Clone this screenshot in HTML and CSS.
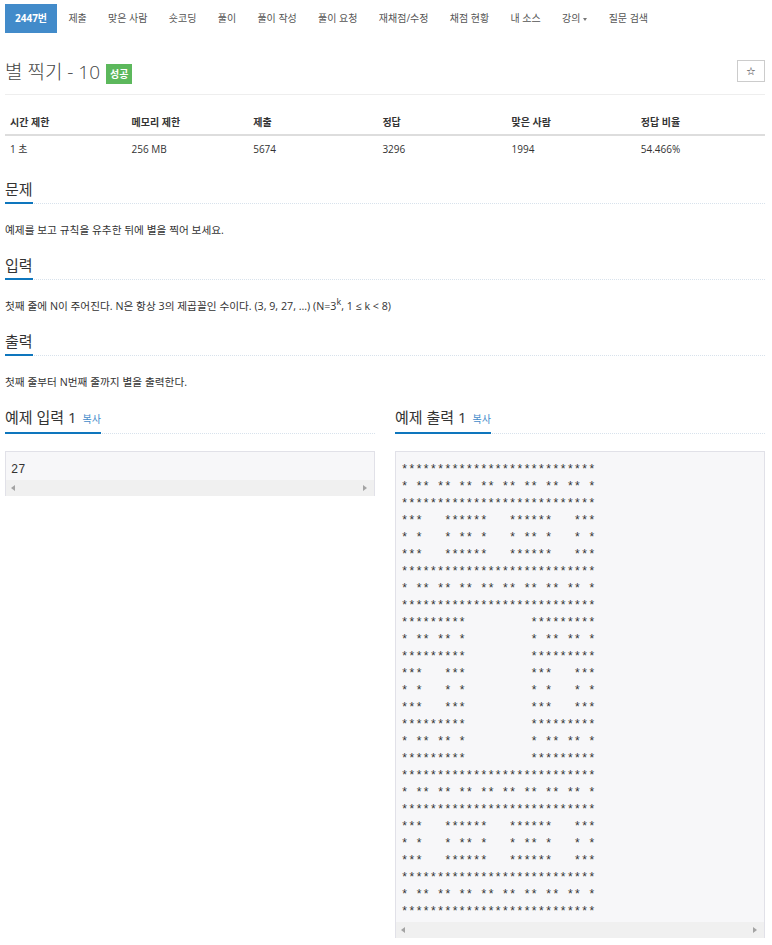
FILE: index.html
```html
<!DOCTYPE html>
<html lang="ko">

<head>
  <meta charset="UTF-8">
  <meta name="viewport" content="width=device-width, initial-scale=1.0">
  <title>2447번: 별 찍기 - 10</title>
  <link rel="stylesheet" href="styles.css">
</head>

<body>
  <div class="page">
    <ul class="problem-menu">
      <li class="active"><a href="#">2447번</a></li>
      <li><a href="#">제출</a></li>
      <li><a href="#">맞은 사람</a></li>
      <li><a href="#">숏코딩</a></li>
      <li><a href="#">풀이</a></li>
      <li><a href="#">풀이 작성</a></li>
      <li><a href="#">풀이 요청</a></li>
      <li><a href="#">재채점/수정</a></li>
      <li><a href="#">채점 현황</a></li>
      <li><a href="#">내 소스</a></li>
      <li><a href="#">강의<span class="caret"></span></a></li>
      <li><a href="#">질문 검색</a></li>
    </ul>

    <div class="page-header">
      <h1 class="problem-title">별 찍기 - 10 <span class="label-success">성공</span></h1>
      <button class="btn-star" type="button">☆</button>
    </div>

    <table class="problem-info">
      <thead>
        <tr>
          <th>시간 제한</th>
          <th>메모리 제한</th>
          <th>제출</th>
          <th>정답</th>
          <th>맞은 사람</th>
          <th>정답 비율</th>
        </tr>
      </thead>
      <tbody>
        <tr>
          <td>1 초</td>
          <td>256 MB</td>
          <td>5674</td>
          <td>3296</td>
          <td>1994</td>
          <td>54.466%</td>
        </tr>
      </tbody>
    </table>

    <section class="problem-section">
      <h2 class="headline"><span>문제</span></h2>
      <p>예제를 보고 규칙을 유추한 뒤에 별을 찍어 보세요.</p>
    </section>

    <section class="problem-section">
      <h2 class="headline"><span>입력</span></h2>
      <p>첫째 줄에 N이 주어진다. N은 항상 3의 제곱꼴인 수이다. (3, 9, 27, ...) (N=3<sup>k</sup>, 1 ≤ k &lt; 8)</p>
    </section>

    <section class="problem-section">
      <h2 class="headline"><span>출력</span></h2>
      <p>첫째 줄부터 N번째 줄까지 별을 출력한다.</p>
    </section>

    <div class="samples">
      <div class="sample">
        <h2 class="headline"><span>예제 입력 1 <a class="copy" href="#">복사</a></span></h2>
        <div class="sample-box">
          <pre class="sampledata">27</pre>
          <div class="scrollbar"><span class="arrow-left"></span><span class="arrow-right"></span></div>
        </div>
      </div>
      <div class="sample">
        <h2 class="headline"><span>예제 출력 1 <a class="copy" href="#">복사</a></span></h2>
        <div class="sample-box">
          <pre class="sampledata">***************************
* ** ** ** ** ** ** ** ** *
***************************
***   ******   ******   ***
* *   * ** *   * ** *   * *
***   ******   ******   ***
***************************
* ** ** ** ** ** ** ** ** *
***************************
*********         *********
* ** ** *         * ** ** *
*********         *********
***   ***         ***   ***
* *   * *         * *   * *
***   ***         ***   ***
*********         *********
* ** ** *         * ** ** *
*********         *********
***************************
* ** ** ** ** ** ** ** ** *
***************************
***   ******   ******   ***
* *   * ** *   * ** *   * *
***   ******   ******   ***
***************************
* ** ** ** ** ** ** ** ** *
***************************</pre>
          <div class="scrollbar"><span class="arrow-left"></span><span class="arrow-right"></span></div>
        </div>
      </div>
    </div>
  </div>
</body>

</html>
```

FILE: styles.css
```css
* {
  box-sizing: border-box;
}

body {
  margin: 0;
  font-family: 'Open Sans', 'Noto Sans CJK KR', sans-serif;
  font-size: 10px;
  color: #333;
  background: white;
}

a {
  text-decoration: none;
}

.page {
  padding: 0 7px 0 5px;
}

/* top menu */
.problem-menu {
  list-style: none;
  margin: 4px 0 0;
  padding: 0;
  display: flex;
  gap: 1.3px;
}

.problem-menu a {
  display: block;
  padding: 0 10px;
  line-height: 29px;
  color: #555;
}

.problem-menu .active a {
  background: #428bca;
  color: white;
  font-weight: bold;
}

.caret {
  display: inline-block;
  width: 0;
  height: 0;
  margin-left: 3px;
  vertical-align: middle;
  border-top: 3px solid #777;
  border-left: 2px solid transparent;
  border-right: 2px solid transparent;
}

/* title */
.page-header {
  display: flex;
  justify-content: space-between;
  align-items: flex-start;
  margin-top: 27px;
  padding-bottom: 10px;
  border-bottom: 1px solid #eee;
}

.problem-title {
  margin: 0;
  font-size: 19px;
  font-weight: 300;
  line-height: 24px;
  color: #444;
}

.label-success {
  display: inline-block;
  vertical-align: middle;
  margin-left: 1px;
  padding: 3px 4px;
  font-size: 10px;
  line-height: 14px;
  font-weight: bold;
  color: white;
  background: #5cb85c;
}

.btn-star {
  width: 28px;
  height: 22px;
  padding: 0;
  border: 1px solid #ccc;
  background: white;
  color: #222;
  font-size: 11px;
  font-family: 'DejaVu Sans', sans-serif;
}

/* info table */
.problem-info {
  width: 100%;
  margin: 15px 0 1px;
  border-collapse: collapse;
  table-layout: fixed;
}

.problem-info th,
.problem-info td {
  text-align: left;
  padding: 5px;
  line-height: 14px;
}

.problem-info th {
  border-bottom: 2px solid #ddd;
}

.problem-info td {
  padding: 6px 5px;
}

.problem-info th:nth-child(1),
.problem-info th:nth-child(2) {
  width: 16%;
}

/* sections */
.headline {
  margin: 0;
  font-size: 15px;
  font-weight: normal;
  line-height: 21px;
  color: #333;
  border-bottom: 1px dotted #d8e2ec;
}

.headline > span {
  display: inline-block;
  padding-bottom: 2px;
  margin-bottom: -1px;
  border-bottom: 2px solid #0e76bd;
}

.problem-section {
  margin-top: 17px;
}

.problem-section p {
  margin: 18px 0 0;
  font-size: 10.7px;
  line-height: 16px;
}

.problem-section p sup {
  line-height: 0;
}

.copy {
  font-size: 10px;
  color: #428bca;
  margin-left: 2px;
}

/* samples */
.samples {
  display: flex;
  gap: 20px;
  margin-top: 17px;
}

.sample {
  flex: 1;
  min-width: 0;
}

.sample-box {
  margin-top: 17px;
  background: #f7f7f9;
  border: 1px solid #e1e1e8;
  border-bottom: none;
}

.sampledata {
  margin: 0;
  padding: 10px 5px 1px;
  font-family: 'Liberation Mono', monospace;
  font-size: 12px;
  line-height: 17px;
  color: #333;
  overflow: hidden;
}

.scrollbar {
  display: flex;
  justify-content: space-between;
  align-items: center;
  height: 16px;
  padding: 0 7px 0 5px;
  background: #f0f0f0;
}

.arrow-left,
.arrow-right {
  width: 0;
  height: 0;
  border-top: 3.5px solid transparent;
  border-bottom: 3.5px solid transparent;
}

.arrow-left {
  border-right: 4px solid #a3a3a3;
}

.arrow-right {
  border-left: 4px solid #a3a3a3;
}
```
